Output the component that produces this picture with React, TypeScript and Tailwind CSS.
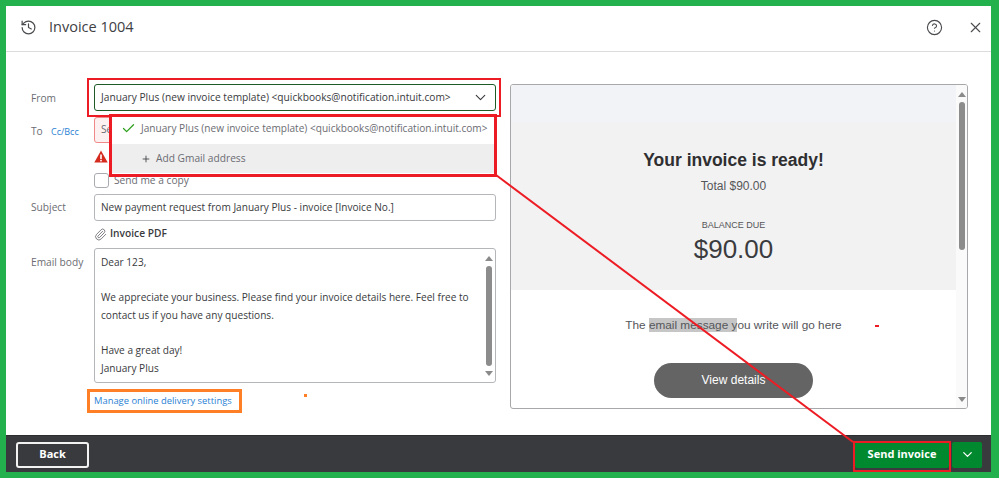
import { History, CircleHelp, X, ChevronDown, Check, Plus, Paperclip } from "lucide-react";

const ff = "[font-family:'Open_Sans','Noto_Sans',sans-serif]";

function Scrollbar({ thumbTop, thumbH, cls }: { thumbTop: string; thumbH: string; cls: string }) {
  return (
    <div className={"relative flex flex-col items-center justify-between shrink-0 " + cls}>
      <svg width="8" height="5" viewBox="0 0 8 5" className="mt-[7px]"><path d="M0 5 L4 0 L8 5Z" fill="#8a8a8a" /></svg>
      <div className={"absolute left-1/2 -translate-x-1/2 w-[6px] rounded-[3px] bg-[#8c8c8c] " + thumbTop + " " + thumbH} />
      <svg width="8" height="5" viewBox="0 0 8 5" className="mb-[6px]"><path d="M0 0 L4 5 L8 0Z" fill="#8a8a8a" /></svg>
    </div>
  );
}

export default function App() {
  return (
    <div className={"relative w-[999px] h-[478px] overflow-hidden bg-[#22b14c] pt-[6px] pl-[6px] pr-[8px] pb-[6px] flex flex-col text-[#393a3d] " + ff}>
      {/* header */}
      <header className="h-[46px] shrink-0 bg-white border-b border-[#dcdcdc] flex items-center pl-[14px] pr-[7px] pb-[3px] text-[#4a4b4e]">
        <History size={17} strokeWidth={1.7} />
        <h1 className="ml-[12px] text-[14.5px] text-[#404144]">Invoice 1004</h1>
        <div className="ml-auto flex items-center gap-[24px]">
          <CircleHelp size={17} strokeWidth={1.6} />
          <X size={17} strokeWidth={1.6} />
        </div>
      </header>

      {/* body */}
      <main className="flex-1 min-h-0 bg-white flex pl-[25px] pt-[32px]">
        {/* form */}
        <div className="w-[465px] shrink-0 text-[10.2px]">
          <div className="flex h-[27px] items-center">
            <span className="w-[63px] pt-[2px] text-[#6b6c72]">From</span>
            <div className="relative w-[402px] h-[27px] rounded-[3px] border border-[#1e5a26] flex items-center pl-[6px] pr-[6px] justify-between">
              <span className="pt-[1px] text-[#393a3d] whitespace-nowrap">January Plus (new invoice template) &lt;quickbooks@notification.intuit.com&gt;</span>
              <ChevronDown size={17} strokeWidth={1.6} className="shrink-0" />
              {/* dropdown */}
              <div className="absolute z-10 left-[16px] top-[30px] w-[385px] h-[58px] bg-white flex flex-col text-[#6b6c72]">
                <div className="h-[29px] shrink-0 flex items-center pl-[10px] pb-[2px]">
                  <Check size={15} strokeWidth={2} className="shrink-0 text-[#2ca01c] mr-[5px]" />
                  <span className="whitespace-nowrap text-[10.1px]">January Plus (new invoice template) &lt;quickbooks@notification.intuit.com&gt;</span>
                </div>
                <div className="flex-1 bg-[#eeeeee] flex items-center pl-[30px]">
                  <Plus size={10} strokeWidth={2} className="mr-[5px] text-[#393a3d]" />
                  <span>Add Gmail address</span>
                </div>
              </div>
            </div>
          </div>

          <div className="flex h-[26px] mt-[6px] items-center">
            <span className="w-[20px] pt-[3px] text-[#6b6c72]">To</span>
            <span className="w-[43px] pt-[3px] text-[#2a7fd4] text-[9px]">Cc/Bcc</span>
            <div className="w-[402px] h-[26px] rounded-[3px] border border-[#f08a8a] bg-[#fdf0f0] flex items-center pl-[6px] text-[#6b6c72]">Se</div>
          </div>

          <div className="pl-[63px] mt-[5px] h-[16px] flex items-center">
            <svg width="14" height="13" viewBox="0 0 14 13"><path d="M7 0.5 L13.7 12.5 L0.3 12.5Z" fill="#d52b1e" /><rect x="6.2" y="4.5" width="1.6" height="4.5" fill="#fff" /><rect x="6.2" y="9.8" width="1.6" height="1.6" fill="#fff" /></svg>
          </div>

          <div className="pl-[63px] mt-[8px] h-[16px] flex items-center">
            <span className="w-[15px] h-[15px] rounded-[3px] border border-[#a9abb0] bg-white" />
            <span className="ml-[5px] pt-[1px] text-[#6b6c72]">Send me a copy</span>
          </div>

          <div className="flex h-[27px] mt-[6px] items-center">
            <span className="w-[63px] pt-[1px] text-[#6b6c72]">Subject</span>
            <div className="w-[402px] h-[27px] rounded-[3px] border border-[#b5b6ba] flex items-center pl-[6px] pt-[1px] whitespace-nowrap text-[10.1px]">New payment request from January Plus - invoice [Invoice No.]</div>
          </div>

          <div className="pl-[63px] mt-[4px] h-[18px] flex items-center">
            <Paperclip size={13} strokeWidth={1.6} className="text-[#6b6c72]" />
            <span className="ml-[3px] font-semibold text-[#393a3d]">Invoice PDF</span>
          </div>

          <div className="flex mt-[5px]">
            <span className="w-[63px] pt-[7px] text-[#6b6c72]">Email body</span>
            <div className="w-[402px] h-[135px] rounded-[3px] border border-[#b5b6ba] flex">
              <div className="flex-1 pl-[6px] pt-[5px] leading-[17.6px] text-[10.1px]">
                <p>Dear 123,</p>
                <p className="mt-[17.6px]">We appreciate your business. Please find your invoice details here. Feel free to contact us if you have any questions.</p>
                <p className="mt-[17.6px]">Have a great day!</p>
                <p>January Plus</p>
              </div>
              <Scrollbar cls="w-[12px]" thumbTop="top-[17px]" thumbH="h-[100px]" />
            </div>
          </div>

          <div className="pl-[63px] mt-[10px]">
            <a className="text-[9.4px] text-[#2a7fd4]">Manage online delivery settings</a>
          </div>
        </div>

        {/* preview */}
        <aside className="ml-[14px] w-[458px] h-[325px] rounded-[3px] border border-[#a8a8aa] flex font-['Liberation_Sans',sans-serif] overflow-hidden">
          <div className="flex-1 flex flex-col min-w-0">
            <div className="h-[37px] bg-[#f2f3f6]" />
            <div className="h-[168px] bg-[#f2f2f2] flex flex-col items-center pt-[28px]">
              <h2 className="text-[17.5px] leading-[20px] font-bold text-[#2f2f31]">Your invoice is ready!</h2>
              <p className="mt-[8px] text-[12px] leading-[16px] text-[#55565a]">Total $90.00</p>
              <p className="mt-[25px] text-[9px] leading-[12px] text-[#55565a]">BALANCE DUE</p>
              <p className="mt-[2px] text-[26px] leading-[32px] text-[#3a3b3e]">$90.00</p>
            </div>
            <div className="flex-1 flex flex-col items-center pt-[27px] text-[#55565a]">
              <p className="text-[11.8px] leading-[17px]">The <span className="bg-[#c6c6c6]">email message y</span>ou write will go here</p>
              <div className="mt-[29px] w-[159px] h-[35px] rounded-full bg-[#646464] text-white text-[12px] flex items-center justify-center pb-[1px]">View details</div>
            </div>
          </div>
          <Scrollbar cls="w-[11px] bg-[#fafafa]" thumbTop="top-[17px]" thumbH="h-[148px]" />
        </aside>
      </main>

      {/* footer */}
      <footer className="h-[37px] shrink-0 bg-[#393a3d] border-t border-[#2c2d30] flex items-center pl-[10px] pr-[9px] pt-[1px]">
        <button className="w-[73px] h-[26px] rounded-[3px] border-2 border-[#f2f2f2] text-white text-[11px] font-bold">Back</button>
        <div className="ml-auto flex gap-[3px]">
          <button className="w-[94px] h-[26px] rounded-[2px] bg-[#00892e] text-white text-[11px] font-bold">Send invoice</button>
          <button className="w-[30px] h-[26px] rounded-[2px] bg-[#00892e] text-white flex items-center justify-center"><ChevronDown size={15} strokeWidth={2} /></button>
        </div>
      </footer>

      {/* annotations */}
      <div className="absolute z-20 left-[87px] top-[78px] w-[414px] h-[39px] border-2 border-[#ed1c24]" />
      <div className="absolute z-20 left-[109px] top-[114px] w-[388px] h-[63px] border-[3px] border-[#ed1c24]" />
      <div className="absolute z-20 left-[87px] top-[389px] w-[155px] h-[24px] border-[3px] border-[#ff7f27]" />
      <div className="absolute z-20 left-[853px] top-[441px] w-[98px] h-[31px] border-2 border-[#ed1c24]" />
      <div className="absolute z-20 left-[304px] top-[394px] w-[3px] h-[3px] bg-[#ff7f27]" />
      <div className="absolute z-20 left-[875px] top-[325px] w-[4px] h-[2px] bg-[#ed1c24]" />
      <svg className="absolute z-20 left-0 top-0 pointer-events-none" width="999" height="478">
        <line x1="496" y1="175" x2="853" y2="442" stroke="#ed1c24" strokeWidth="2" />
      </svg>
    </div>
  );
}
